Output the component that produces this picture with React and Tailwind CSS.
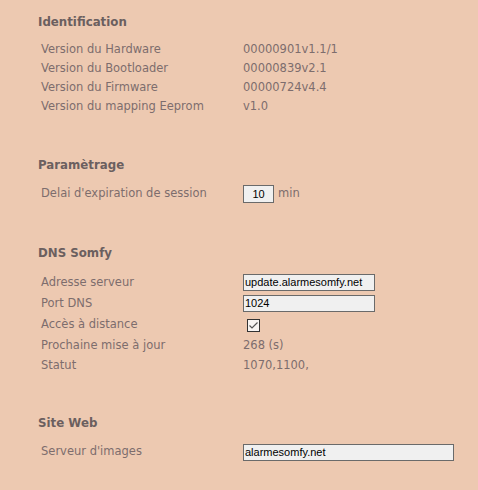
import React from "react";

function Heading({ children, className = "" }) {
  return (
    <div className={"h-[14px] leading-[14px] text-[11.8px] font-bold text-[#6b5f5f] " + className}>{children}</div>
  );
}

function Row({ label, h, children }) {
  return (
    <div className={"flex items-center " + h}>
      <div className="w-[205px] pl-[3px] text-[#7d6d6d] whitespace-nowrap">{label}</div>
      <div className="flex items-center text-[#7d6d6d]">{children}</div>
    </div>
  );
}

function TextBox({ value, w }) {
  return (
    <div
      className={
        "h-[17px] border border-[#6a6a6a] bg-[#f0f0f0] text-black flex items-center pl-px font-['Liberation_Sans',sans-serif] text-[11px] leading-none " +
        w
      }
    >
      {value}
    </div>
  );
}

export default function App() {
  return (
    <div className="w-[478px] h-[490px] bg-[#edc9b1] font-['DejaVu_Sans',sans-serif] text-[11.5px] pl-[38px] pt-[15px]">
      <Heading>Identification</Heading>
      <div className="mt-[11px]">
        <Row label="Version du Hardware" h="h-[19px]">00000901v1.1/1</Row>
        <Row label="Version du Bootloader" h="h-[19px]">00000839v2.1</Row>
        <Row label="Version du Firmware" h="h-[19px]">00000724v4.4</Row>
        <Row label="Version du mapping Eeprom" h="h-[19px]">v1.0</Row>
      </div>

      <Heading className="mt-[42px]">Paramètrage</Heading>
      <div className="mt-[11px]">
        <Row label="Delai d'expiration de session" h="h-[22px]">
          <div className="w-[31px] h-[18px] border border-[#6a6a6a] bg-[#f0f0f0] text-black flex items-center justify-center font-['Liberation_Sans',sans-serif] text-[11px] leading-none">
            10
          </div>
          <span className="ml-[4px]">min</span>
        </Row>
      </div>

      <Heading className="mt-[41px]">DNS Somfy</Heading>
      <div className="mt-[12px]">
        <Row label="Adresse serveur" h="h-[21px]">
          <TextBox value="update.alarmesomfy.net" w="w-[132px]" />
        </Row>
        <Row label="Port DNS" h="h-[21px]">
          <TextBox value="1024" w="w-[132px]" />
        </Row>
        <Row label="Accès à distance" h="h-[22px]">
          <div className="ml-[4px] w-[13px] h-[13px] border border-[#333333] bg-[#f7f4f2] flex items-center justify-center">
            <svg width="11" height="11" viewBox="0 0 11 11">
              <path d="M1.5 5.5 L4 8 L9.5 2.5" fill="none" stroke="#555555" strokeWidth="1.2" />
            </svg>
          </div>
        </Row>
        <Row label="Prochaine mise à jour" h="h-[20px]">268 (s)</Row>
        <Row label="Statut" h="h-[19px]">1070,1100,</Row>
      </div>

      <Heading className="mt-[41px]">Site Web</Heading>
      <div className="mt-[11px]">
        <Row label="Serveur d'images" h="h-[22px]">
          <TextBox value="alarmesomfy.net" w="w-[211px]" />
        </Row>
      </div>
    </div>
  );
}
